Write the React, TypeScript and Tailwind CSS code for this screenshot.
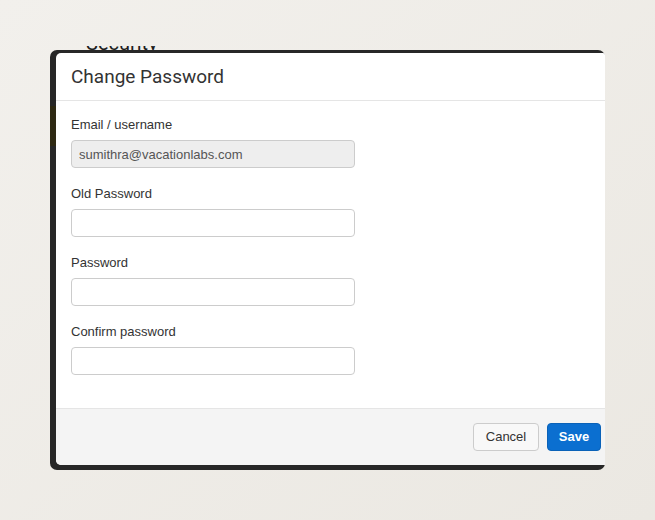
export default function App() {
  const fields = [
    { label: "Email / username", value: "sumithra@vacationlabs.com", disabled: true },
    { label: "Old Password", value: "" },
    { label: "Password", value: "" },
    { label: "Confirm password", value: "" },
  ];

  return (
    <div className="relative w-[655px] h-[520px] overflow-hidden bg-gradient-to-br from-[#f2f0ec] to-[#ebe8e2] font-['Liberation_Sans',Arial,sans-serif]">
      {/* page behind the modal, mostly hidden */}
      <div className="absolute left-[86px] top-[46px] h-[4px] overflow-hidden">
        <div className="-mt-[15px] text-[20px] leading-[24px] text-[#1e1e1e] font-['Roboto',sans-serif]">Security</div>
      </div>

      {/* dark frame */}
      <div className="absolute left-[50px] top-[50px] w-[555px] h-[420px] rounded-[7px] bg-[#272727]" />
      <div className="absolute left-[50px] top-[106px] w-[6px] h-[40px] bg-[#2e2913]" />

      {/* modal */}
      <div className="absolute left-[56px] top-[53px] w-[549px] h-[412px] flex flex-col overflow-hidden rounded-tl-[5px] rounded-bl-[5px] rounded-tr-[2px] bg-white">
        <div className="h-[48px] shrink-0 flex items-center px-[15px] border-b border-[#e5e5e5]">
          <h2 className="text-[19px] leading-none text-[#333] font-['Roboto',sans-serif]">Change Password</h2>
        </div>

        <div className="flex-1 pt-[14px] pb-[16px] px-[15px]">
          {fields.map((f) => (
            <div key={f.label} className="mb-[16px]">
              <label className="block h-[20px] leading-[20px] mb-[5px] text-[13px] text-[#333]">{f.label}</label>
              <input
                type={f.disabled ? "text" : "password"}
                defaultValue={f.value}
                disabled={f.disabled}
                className={
                  f.disabled
                    ? "block w-[284px] h-[28px] px-[7px] rounded-[4px] border border-[#cccccc] bg-[#eeeeee] text-[13px] text-[#555] outline-none"
                    : "block w-[284px] h-[28px] px-[7px] rounded-[4px] border border-[#cccccc] bg-white text-[13px] text-[#555] outline-none"
                }
              />
            </div>
          ))}
        </div>

        <div className="h-[57px] shrink-0 flex items-center justify-end gap-[8px] pr-[4px] border-t border-[#e5e5e5] bg-[#f4f4f4]">
          <button className="h-[28px] w-[66px] rounded-[4px] border border-[#cccccc] bg-[#f8f8f8] text-[13px] text-[#333]">
            Cancel
          </button>
          <button className="h-[28px] w-[54px] rounded-[4px] border border-[#0a62b8] bg-[#0b6fd0] text-[13px] font-semibold text-white">
            Save
          </button>
        </div>
      </div>
    </div>
  );
}
